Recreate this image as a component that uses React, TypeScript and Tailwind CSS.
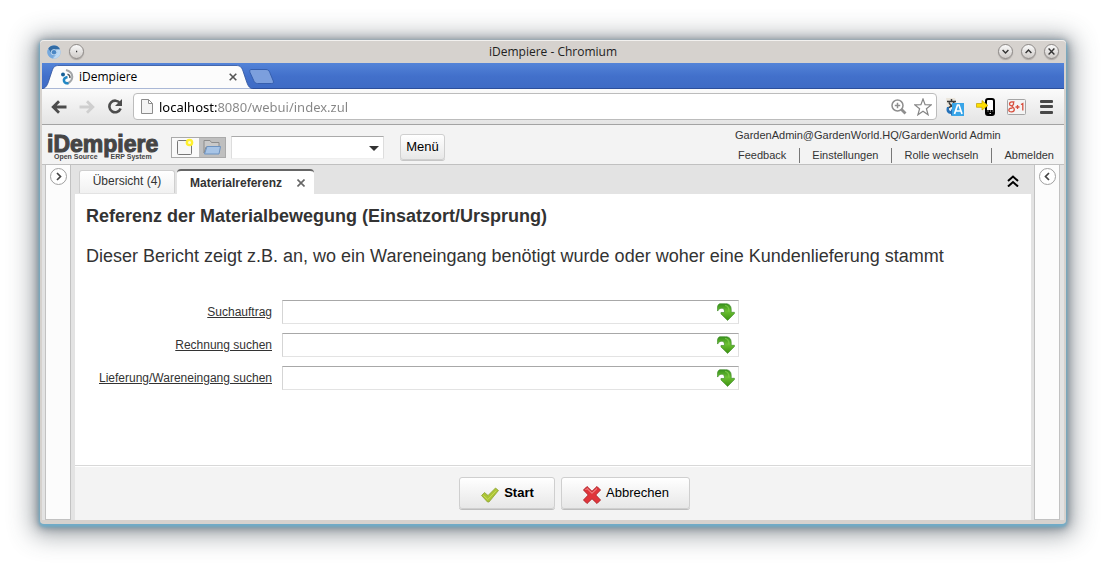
import React from "react";
import clsx from "clsx";

const ui = "font-['Open_Sans','Noto_Sans',sans-serif]";

const WindowButton = ({ label, d }: { label: string; d: string }) => (
  <button
    type="button"
    aria-label={label}
    className="size-[15px] rounded-full border border-[#8d8987] bg-linear-to-b from-[#fafafa] to-[#cfcbc8] shadow-[0_1px_1px_#aaa5a2]">
    <svg viewBox="0 0 13 13" className="block size-[13px]" fill="none" stroke="#333" strokeWidth="1.4">
      <path d={d} />
    </svg>
  </button>
);

const TitleBar = () => (
  <div className="flex h-[23px] items-center px-[5px]">
    <div className="flex w-[61px] items-center gap-2">
      <svg viewBox="0 0 16 16" className="size-[14px]">
        <circle cx="8" cy="8" r="7.6" fill="#8fb8e2" />
        <path d="M1.4 4.200A7.600 7.600 0 0 1 14.900 5H8A3.400 3.400 0 0 0 4.800 8.800z" fill="#336ca5" />
        <path d="M1.400 4.200 5 10.800 8 11.400 6.400 15.400A7.600 7.600 0 0 1 1.400 4.200" fill="#76a9de" />
        <path d="M14.900 5.200A7.600 7.600 0 0 1 7 15.500l3.800-5A3.500 3.500 0 0 0 10 5.200z" fill="#bcd9f4" />
        <circle cx="8" cy="8.200" r="3.300" fill="#c9def2" />
        <circle cx="8" cy="8.200" r="2.600" fill="#4a86c4" />
      </svg>
      <WindowButton label="Fenstermenü" d="M6 6.5h1.2" />
    </div>
    <span className={clsx(ui, "flex-1 text-center text-[12px] leading-4 text-[#222]")}>
      iDempiere - Chromium
    </span>
    <div className="flex gap-2">
      <WindowButton label="Minimieren" d="m3.6 5 2.9 3 2.9-3" />
      <WindowButton label="Maximieren" d="m3.6 8 2.9-3 2.9 3" />
      <WindowButton label="Schließen" d="m3.6 3.6 5.8 5.8m0-5.8L3.6 9.4" />
    </div>
  </div>
);

const TabStrip = () => (
  <div className="flex h-[26px] items-end bg-linear-to-b from-[#5484d8] via-[#4270cb] to-[#3e6bc4] shadow-[inset_0_-1px_#2c4f9b]">
    <div className="relative flex h-6 w-[211px] items-center pr-4 pl-[18px]">
      <svg viewBox="0 0 211 24" className="absolute inset-0 h-6 w-[211px]">
        <path
          d="M0 24C4 23 5.500 20 7 15L10 6C11.500 2 12.500 .5 17 .5H194C198 .5 199.500 2 201 6L204 15C206 21 207 23 211 24Z"
          fill="#fcfcfc"
          stroke="#2f529c"
          strokeWidth=".8"
        />
      </svg>
      <svg viewBox="0 0 14 16" className="relative h-4 w-[14px]" fill="none">
        <path d="M6 1c4 1.200 6.300 3.500 6.300 6.700 0 3.600-2.300 5.700-5.300 6.800" stroke="#a2a5a8" strokeWidth="2" />
        <path d="M7.500 5.200c1.800.6 2.800 2 2.400 4" stroke="#55585b" strokeWidth="1.400" />
        <path d="M7.500 8C5 8.500 3.500 10 4 12s2.500 2.600 4.500 2" stroke="#2187c4" strokeWidth="2.600" />
        <circle cx="3" cy="5.500" r="2" fill="#155f97" />
      </svg>
      <span className={clsx(ui, "relative ml-[5px] flex-1 text-[12px] leading-4 text-black")}>
        iDempiere
      </span>
      <button type="button" aria-label="Tab schließen" className="relative">
        <svg viewBox="0 0 8 8" className="block size-2" stroke="#555" strokeWidth="1.600">
          <path d="m.7.7 6.600 6.600m0-6.600L.7 7.300" />
        </svg>
      </button>
    </div>
    <button type="button" aria-label="Neuer Tab" className="-ml-[5px] h-[21px] w-[27px]">
      <svg viewBox="0 0 27 21" className="block h-[21px] w-[27px]">
        <path
          d="M3 1.500H18c2 0 3 1 3.800 3l3.500 8.500c.7 2-.3 2.500-2 2.500H9.500c-2 0-3-1-3.800-3L2 4.500c-.7-2 0-3 1-3z"
          fill="#7c9fdd"
          stroke="#365fae"
        />
      </svg>
    </button>
  </div>
);

const Toolbar = () => (
  <div className="flex h-9 items-center border-b border-[#a3a3a3] bg-linear-to-b from-[#fbfbfb] to-[#e4e4e4] pr-[11px] pl-[9px]">
    <div className="flex items-center gap-3">
      <button type="button" aria-label="Zurück">
        <svg viewBox="0 0 16 14" className="block h-[14px] w-4" fill="none" stroke="#4c4c4c" strokeWidth="2.800">
          <path d="M15.500 7H3M8 1.200 2.200 7 8 12.800" />
        </svg>
      </button>
      <button type="button" aria-label="Vorwärts">
        <svg viewBox="0 0 16 14" className="block h-[14px] w-4" fill="none" stroke="#cfcfcf" strokeWidth="2.800">
          <path d="M.5 7H13M8 1.200 13.800 7 8 12.800" />
        </svg>
      </button>
      <button type="button" aria-label="Neu laden">
        <svg viewBox="0 0 16 15" className="block h-[15px] w-4" fill="none">
          <path d="M13 4.200A5.800 5.800 0 1 0 13.600 9.600" stroke="#4c4c4c" strokeWidth="2.600" />
          <path d="M15 0v7H8z" fill="#4c4c4c" />
        </svg>
      </button>
    </div>
    <div className="ml-[10px] flex h-[27px] flex-1 items-center rounded-[4px] border border-[#bcbcbc] bg-white pr-1 pl-[7px]">
      <svg viewBox="0 0 12 15" className="h-[15px] w-3" fill="#f4f4f4" stroke="#8c8c8c">
        <path d="M.5.5h7l4 4v10H.5zM7.500.5v4h4" />
      </svg>
      <input
        aria-label="Adresse"
        defaultValue="localhost:8080/webui/index.zul"
        className="ml-[6px] min-w-0 flex-1 bg-[linear-gradient(90deg,#000_58px,#858585_58px)] bg-clip-text font-['Noto_Sans','Open_Sans',sans-serif] text-[13px] leading-5 text-transparent outline-none"
      />
      <svg viewBox="0 0 16 16" className="mr-[7px] size-4" fill="none" stroke="#8e8e8e" strokeWidth="1.500">
        <circle cx="6.500" cy="6.500" r="5.500" />
        <path d="M3.800 6.500h5.400M6.500 3.800v5.400" />
        <path d="m10.500 10.500 4 4" strokeWidth="2.800" />
      </svg>
      <svg viewBox="0 0 18 18" className="size-[18px]" fill="#fff" stroke="#858585" strokeWidth="1.200">
        <path d="m9 1 2.100 5.700 6.100.2-4.800 3.800L14.100 16.800 9 13.300 3.900 16.800l1.700-6.100L.8 6.900l6.100-.2z" />
      </svg>
    </div>
    <div className="ml-2 flex items-center gap-[11px]">
      <svg viewBox="0 0 20 18" className="h-[18px] w-5">
        <path d="M1 0h9l3 10H2z" fill="#ebe6dc" />
        <path d="M2 3.500h9M6.500 1v2.500M9 4C8 7 5.500 9 3 10M4 4.500C5 7.500 8 9 10 10" stroke="#3a3a3a" strokeWidth="1.500" fill="none" />
        <path d="M2 9c-1.500 4 .5 7 4 7v2l4-3.500L6 11v2c-2 0-2.500-2-2-4z" fill="#2572ba" />
        <path d="M7 5h12v13H7z" fill="#39a5e8" />
        <path d="m9.500 16 3-9H14l3 9M11 13h4.500" stroke="#fff" strokeWidth="1.700" fill="none" />
      </svg>
      <svg viewBox="0 0 20 18" className="h-[18px] w-5">
        <rect x="10" y="1" width="8" height="16" rx="2" fill="#fff" stroke="#000" strokeWidth="2" />
        <path d="M10 12h8v4h-8z" />
        <path d="M11.500 13h1m1.500 0h1m1.500 0h.8M13.500 15.500h1.500" stroke="#ddd" />
        <path d="M.5 5.500H6V2.500L12 7.500 6 12V9.300H.5z" fill="#ffdf00" stroke="#bfa000" strokeWidth=".7" />
      </svg>
      <svg viewBox="0 0 19 16" className="h-4 w-[19px]" fill="none">
        <rect x=".5" y=".5" width="18" height="15" rx="1" fill="#f4f4f4" stroke="#a5a5a5" />
        <path
          d="M7.500 2.800H4.800c-3 .2-3 3.800-.4 4 2 0 2.800-2 1.600-3.800M5 7c0 1.300 2.300 1.500 2.300 3.500 0 3-5.500 3-5.500.7C1.800 9.400 4 9 5.500 9M8.500 8h4M10.500 6v4M14 5.500l1.800-1v7"
          stroke="#d8503f"
          strokeWidth="1.300"
        />
      </svg>
      <button type="button" aria-label="Einstellungen" className="ml-[3px] flex h-[14px] w-[13px] flex-col justify-between">
        <span className="h-[3px] w-full rounded-[1px] bg-[#484848]" />
        <span className="h-[3px] w-full rounded-[1px] bg-[#484848]" />
        <span className="h-[3px] w-full rounded-[1px] bg-[#484848]" />
      </button>
    </div>
  </div>
);

const Logo = () => (
  <div className="w-[110px] font-bold text-[#454545]">
    <p className="text-[23px] leading-[18px] [-webkit-text-stroke:1px_#454545]">iDempiere</p>
    <p className="flex gap-[13px] pl-[7px] text-[7px] leading-[7px] whitespace-nowrap">
      <span>Open Source</span>
      <span>ERP System</span>
    </p>
  </div>
);

const links = ["Feedback", "Einstellungen", "Rolle wechseln", "Abmelden"];

const Header = () => (
  <header className="flex h-10 justify-between border-b border-[#c0c0c0] bg-[#f3f3f3] pr-[10px] pl-[5px]">
    <div className="flex items-center pt-[5px]">
      <Logo />
      <div className="ml-[14px] flex h-[21px] w-[55px] border border-[#aaa]">
        <button type="button" aria-label="Neu" className="flex flex-1 items-center justify-center bg-[#fafafa]">
          <svg viewBox="0 0 18 18" className="size-[18px]">
            <rect x="1.500" y="2.500" width="14" height="14" rx="1" fill="#f7f7f7" stroke="#777" />
            <circle cx="13.500" cy="4.500" r="3.800" fill="#fff02d" />
            <circle cx="13.500" cy="4.500" r="1.500" fill="#fffbd0" />
          </svg>
        </button>
        <button type="button" aria-label="Öffnen" className="flex flex-1 items-center justify-center bg-[#bfbfbf]">
          <svg viewBox="0 0 18 16" className="h-4 w-[18px]">
            <path d="M1 14V1.500h6l1.500 2H16V8H3z" fill="#c9c9c9" stroke="#8c8c8c" />
            <path d="M4 7.500h13.500L16 15H1.500z" fill="#a7c4e6" stroke="#6d93c1" />
          </svg>
        </button>
      </div>
      <div className="relative ml-[5px]">
        <select
          aria-label="Suche"
          className="block h-[23px] w-[153px] appearance-none border border-t-[#aaa] border-r-[#ddd] border-b-[#eee] border-l-[#ddd] bg-white"
        />
        <span className="pointer-events-none absolute top-[10px] right-[5px] border-x-[5px] border-t-[5px] border-x-transparent border-t-[#333]" />
      </div>
      <button
        type="button"
        className="ml-4 h-[26px] w-[45px] rounded-[3px] border border-[#cfcfcf] bg-linear-to-b from-white to-[#e8e8e8] text-[13px] leading-4 text-black shadow-[0_1px_#c6c6c6]">
        Menü
      </button>
    </div>
    <div className="flex w-[319px] flex-col text-[11px] leading-[14px] text-[#333]">
      <p className="pt-[3px]">GardenAdmin@GardenWorld.HQ/GardenWorld Admin</p>
      <nav className="mt-[6px] flex justify-between pl-[3px]">
        {links.map((link, i) => (
          <React.Fragment key={link}>
            {i > 0 && <span className="h-[15px] w-px bg-[#777]" />}
            <a href="#">{link}</a>
          </React.Fragment>
        ))}
      </nav>
    </div>
  </header>
);

const SidePanel = ({ label, d }: { label: string; d: string }) => (
  <aside className="flex w-[26px] shrink-0 justify-center border border-t-0 border-[#c2c2c2] bg-[#fcfcfc] pt-[3px]">
    <button type="button" aria-label={label} className="size-[17px] rounded-full border border-[#a0a0a0] bg-white">
      <svg viewBox="0 0 15 15" className="block size-[15px]" fill="none" stroke="#444" strokeWidth="1.700">
        <path d={d} />
      </svg>
    </button>
  </aside>
);

const Tabs = () => (
  <div className="flex h-[29px] items-end bg-[#e3e3e3] pl-1">
    <button
      type="button"
      className="mb-px h-[23px] w-24 rounded-t-[3px] border border-b-0 border-[#cfcfcf] bg-linear-to-b from-white to-[#f1f1f1] pb-[2px] text-[12px] leading-4 text-[#333]">
      Übersicht (4)
    </button>
    <div className="ml-[2px] flex h-[25px] w-[137px] items-center rounded-t-[4px] border-t-2 border-[#666] bg-white pr-[9px] pl-[13px] text-[12px] leading-4 font-bold text-[#333]">
      <span className="flex-1">Materialreferenz</span>
      <button type="button" aria-label="Materialreferenz schließen">
        <svg viewBox="0 0 8 8" className="block size-2" stroke="#666" strokeWidth="1.600">
          <path d="m.5.5 7 7m0-7-7 7" />
        </svg>
      </button>
    </div>
    <button type="button" aria-label="Einklappen" className="mr-3 mb-[7px] ml-auto">
      <svg viewBox="0 0 12 12" className="block size-3" fill="none" stroke="#000" strokeWidth="2">
        <path d="m1 6 5-4.500L11 6M1 11.500 6 7l5 4.500" />
      </svg>
    </button>
  </div>
);

const fields = [
  { id: "order", label: "Suchauftrag" },
  { id: "invoice", label: "Rechnung suchen" },
  { id: "shipment", label: "Lieferung/Wareneingang suchen" },
];

const SearchField = ({ id, label }: { id: string; label: string }) => (
  <div className="flex h-6 items-center gap-[10px]">
    <label htmlFor={id} className="w-[186px] text-right text-[12px] leading-4 text-[#333] underline">
      {label}
    </label>
    <div className="flex h-6 w-[457px] items-center border border-t-[#a8a8a8] border-r-[#e0e0e0] border-b-[#e3e3e3] border-l-[#d5d5d5] bg-white pr-[3px]">
      <input id={id} type="text" className="h-full min-w-0 flex-1 px-1 text-[12px] outline-none" />
      <button type="button" aria-label={`${label} öffnen`}>
        <svg viewBox="0 0 19 19" className="block size-[18px]">
          <defs>
            <linearGradient id={`${id}-arrow`} x1="0" y1="0" x2="0" y2="1">
              <stop offset="0" stopColor="#37911c" />
              <stop offset=".45" stopColor="#6cc032" />
              <stop offset="1" stopColor="#3c9211" />
            </linearGradient>
          </defs>
          <path
            d="M.6 8.500C0 4.500.8 1.200 3 .8H9c4.500 0 6 2.500 6 6.500v2.500h3.400v1.400L11.200 18.400 4.200 11.500V10h3.600c.4-2.300-.3-4-2.300-4.500C3.500 5.200 1.800 6.500.6 8.500z"
            fill={`url(#${id}-arrow)`}
            stroke="#3f8a2b"
            strokeWidth=".7"
          />
          <path d="M8.500 2.500c3 .5 4.300 2.500 4 6.500" stroke="#86d04f" strokeWidth="1.200" fill="none" opacity=".7" />
        </svg>
      </button>
    </div>
  </div>
);

const actionButton =
  "flex h-8 items-center justify-center gap-1 rounded-[3px] border border-[#cfcfcf] bg-linear-to-b from-white to-[#e7e7e7] text-[13px] leading-4 text-black shadow-[0_1px_#bdbdbd]";

const App = () => (
  <div className="flex min-h-screen flex-col bg-white p-10 font-['Liberation_Sans',Arial,sans-serif]">
    <div className="flex flex-1 flex-col rounded-[4px] bg-[#d6d2ce] px-[2px] pb-1 shadow-[inset_0_1px_#f3f1ef,0_2px_3px_1px_#6fadca,0_2px_10px_2px_rgba(60,75,90,0.55),0_4px_24px_8px_rgba(60,70,80,0.45)]">
      <TitleBar />
      <TabStrip />
      <Toolbar />
      <Header />
      <div className="flex flex-1 bg-[#e3e3e3] pr-1 pl-[3px]">
        <SidePanel label="Linkes Feld öffnen" d="m6 4 3.500 3.500L6 11" />
        <main className="mr-[3px] ml-1 flex min-w-0 flex-1 flex-col">
          <Tabs />
          <section className="flex-1 bg-white px-[11px] pt-3 text-[#333]">
            <h1 className="text-[18px] leading-5 font-bold">
              Referenz der Materialbewegung (Einsatzort/Ursprung)
            </h1>
            <p className="mt-5 text-[18px] leading-5">
              Dieser Bericht zeigt z.B. an, wo ein Wareneingang benötigt wurde oder woher eine Kundenlieferung stammt
            </p>
            <form className="mt-[34px] flex flex-col gap-[9px]">
              {fields.map((field) => (
                <SearchField key={field.id} {...field} />
              ))}
            </form>
          </section>
          <footer className="flex h-[55px] items-center justify-center gap-[6px] border-t border-[#d8d8d8] bg-[#f3f3f3] pl-[43px] shadow-[inset_0_1px_#fff]">
            <button type="button" className={clsx(actionButton, "w-24 font-bold")}>
              <svg viewBox="0 0 20 18" className="mt-[3px] h-[18px] w-5">
                <path d="m1.500 9.500 3-3 3.500 3L15.500 2l3 2.500L9 16H7.500z" fill="#aac436" stroke="#8fa238" strokeWidth=".8" />
                <path d="m3.500 9.500 4.300 4 8.500-9" stroke="#cadc55" fill="none" />
              </svg>
              Start
            </button>
            <button type="button" className={clsx(actionButton, "w-[129px]")}>
              <svg viewBox="0 0 20 20" className="mt-[3px] size-5">
                <path
                  d="M1.500 5 5 1.500l5 4.800 5-4.800L18.500 5l-4.800 5 4.800 5-3.500 3.500-5-4.800-5 4.800L1.500 15l4.800-5z"
                  fill="#e0343a"
                  stroke="#b3252b"
                  strokeLinejoin="round"
                />
                <path d="M3.500 5 5 3.500l5 4.800 5-4.800" stroke="#f39a98" strokeWidth="1" fill="none" />
              </svg>
              Abbrechen
            </button>
          </footer>
        </main>
        <SidePanel label="Rechtes Feld öffnen" d="M9 4 5.500 7.500 9 11" />
      </div>
    </div>
  </div>
);

export default App;
